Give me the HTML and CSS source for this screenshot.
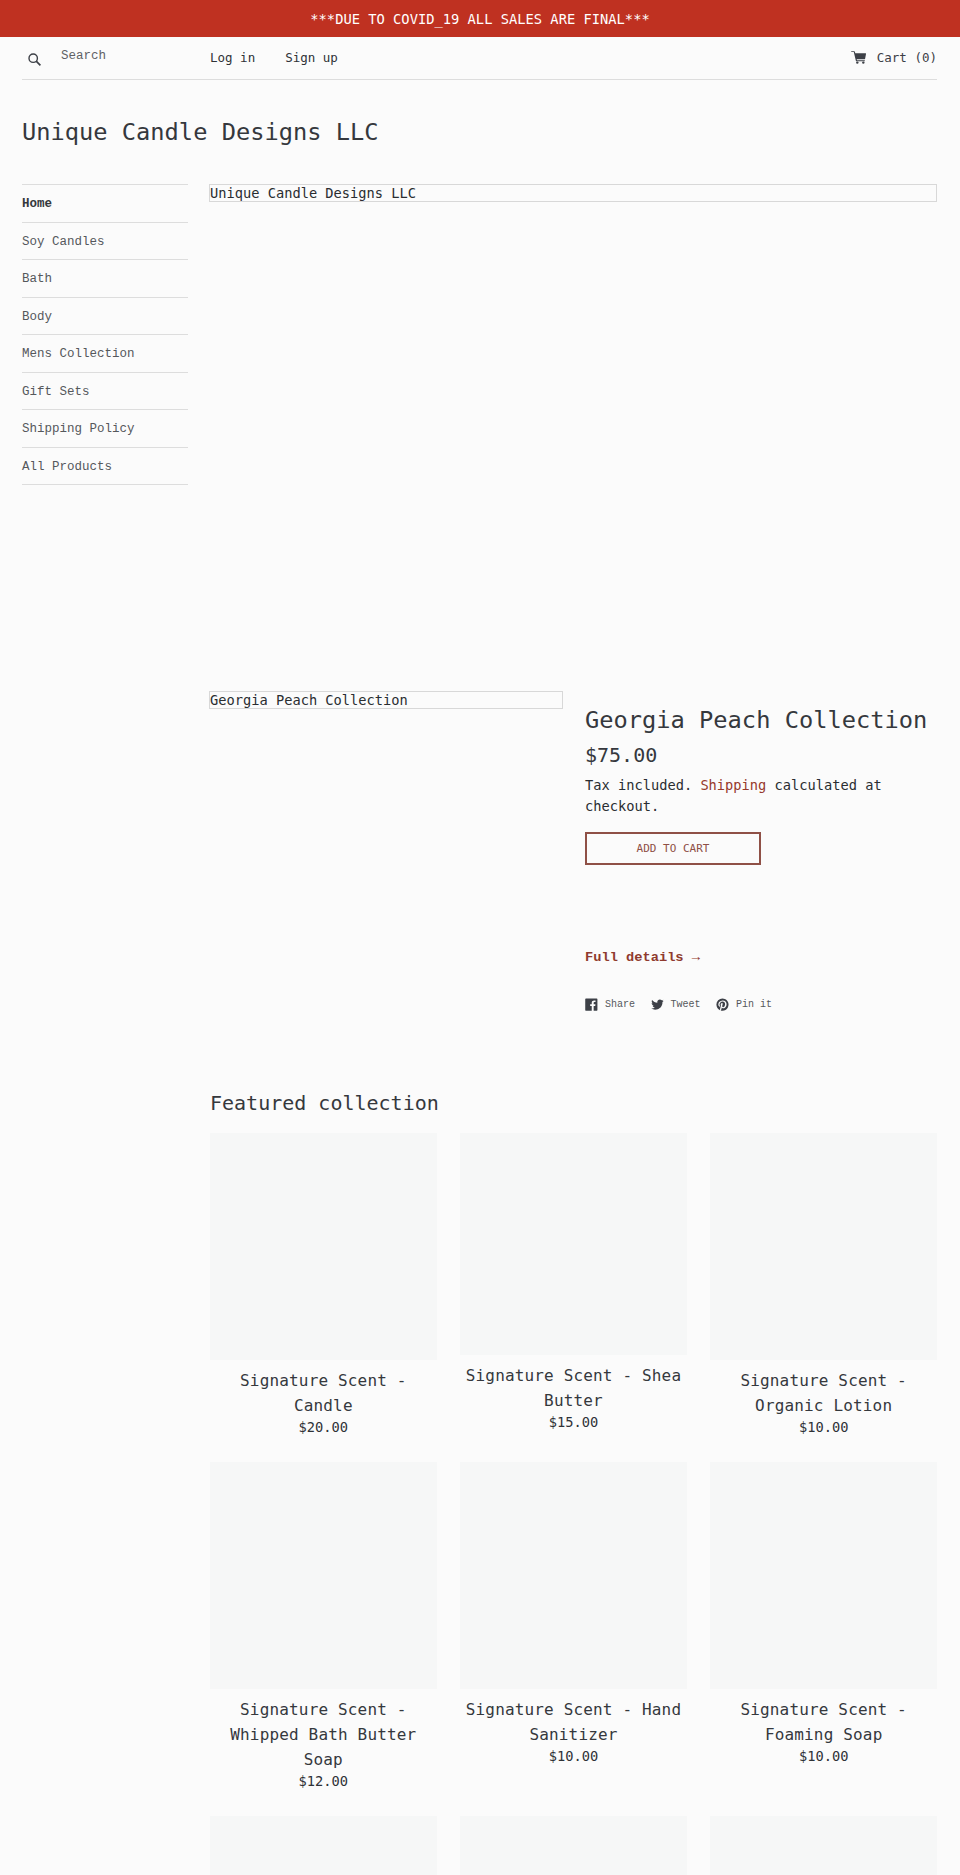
FILE: index.html
```html
<!DOCTYPE html>
<html lang="en">
<head>
    <meta charset="UTF-8">
    <meta name="viewport" content="width=device-width, initial-scale=1.0">
    <title>Unique Candle Designs LLC</title>
    <link rel="stylesheet" href="styles.css">
</head>
<body>
    <div class="announcement">***DUE TO COVID_19 ALL SALES ARE FINAL***</div>

    <div class="page">
        <header class="top-bar">
            <form class="search">
                <svg class="icon-search" viewBox="0 0 13 13" aria-hidden="true">
                    <circle cx="5.2" cy="5.2" r="4.2" fill="none" stroke="#3d4047" stroke-width="1.4"/>
                    <path d="M8.2 8.2L12.4 12.4" stroke="#3d4047" stroke-width="1.7" fill="none"/>
                </svg>
                <span class="search-text">Search</span>
            </form>
            <nav class="account">
                <a href="#">Log in</a>
                <a href="#">Sign up</a>
            </nav>
            <a class="cart" href="#">
                <svg class="icon-cart" viewBox="0 0 20 17" aria-hidden="true">
                    <path fill="#3d4047" d="M0 .6C0 .3.3 0 .6 0h3.6c.5 0 .9.3 1 .8l.5 2h13.6c.5 0 .8.4.7.9l-1.2 6.4c-.1.5-.5.8-1 .8H7.6l.3 1.2h10c.4 0 .7.3.7.7s-.3.7-.7.7H7.3c-.4 0-.7-.3-.8-.7L3.7 1.3H.6C.3 1.3 0 1 0 .6z"/>
                    <circle fill="#3d4047" cx="8.4" cy="15.3" r="1.6"/>
                    <circle fill="#3d4047" cx="16.4" cy="15.3" r="1.6"/>
                </svg>
                <span>Cart (0)</span>
            </a>
        </header>

        <h1 class="site-title">Unique Candle Designs LLC</h1>

        <div class="layout">
            <nav class="sidebar">
                <ul>
                    <li class="active"><a href="#">Home</a></li>
                    <li><a href="#">Soy Candles</a></li>
                    <li><a href="#">Bath</a></li>
                    <li><a href="#">Body</a></li>
                    <li><a href="#">Mens Collection</a></li>
                    <li><a href="#">Gift Sets</a></li>
                    <li><a href="#">Shipping Policy</a></li>
                    <li><a href="#">All Products</a></li>
                </ul>
            </nav>

            <main class="content">
                <div class="hero">
                    <div class="alt-box">Unique Candle Designs LLC</div>
                </div>

                <section class="product">
                    <div class="product-photo">
                        <div class="alt-box">Georgia Peach Collection</div>
                    </div>
                    <div class="product-info">
                        <h2 class="product-title">Georgia Peach Collection</h2>
                        <div class="product-price">$75.00</div>
                        <p class="tax-note">Tax included. <a href="#">Shipping</a> calculated at checkout.</p>
                        <button type="button" class="add-to-cart">ADD TO CART</button>
                        <a class="full-details" href="#">Full details &rarr;</a>
                        <div class="share">
                            <a href="#">
                                <svg viewBox="0 0 20 20" aria-hidden="true"><path d="M18.05.811q.439 0 .744.305t.305.744v16.637q0 .439-.305.744t-.744.305h-4.732v-7.221h2.415l.342-2.854h-2.757v-1.83q0-.659.293-1t1.073-.342h1.488V3.762q-.976-.098-2.171-.098-1.634 0-2.635.964t-1 2.72V9.47H7.951v2.854h2.415v7.221H1.413q-.439 0-.744-.305t-.305-.744V1.859q0-.439.305-.744T1.413.81H18.05z"/></svg>
                                <span>Share</span>
                            </a>
                            <a href="#">
                                <svg viewBox="0 0 20 20" aria-hidden="true"><path d="M19.551 4.208q-.815 1.202-1.956 2.038 0 .082.02.255t.02.255q0 1.589-.469 3.179t-1.426 3.036-2.272 2.567-3.158 1.793-3.963.672q-3.301 0-6.031-1.773.571.041.937.041 2.751 0 4.911-1.671-1.284-.02-2.292-.784T2.456 11.85q.346.082.754.082.55 0 1.039-.163-1.365-.285-2.262-1.365T1.09 7.918v-.041q.774.408 1.773.448-.795-.53-1.263-1.396t-.469-1.864q0-1.019.509-1.997 1.487 1.854 3.596 2.924T9.81 7.184q-.143-.509-.143-.897 0-1.63 1.161-2.781t2.832-1.151q1.712 0 2.851 1.182 1.345-.265 2.56-.984-.469 1.467-1.752 2.242 1.182-.143 2.332-.587z"/></svg>
                                <span>Tweet</span>
                            </a>
                            <a href="#">
                                <svg viewBox="0 0 20 20" aria-hidden="true"><path d="M9.958.811q1.903 0 3.635.744t2.988 2 2 2.988.744 3.635q0 2.537-1.256 4.696t-3.415 3.415-4.696 1.256q-1.39 0-2.659-.366.707-1.147.951-2.025l.659-2.561q.244.463.903.817t1.39.354q1.464 0 2.622-.842t1.793-2.305.634-3.293q0-2.171-1.671-3.769t-4.257-1.598q-1.586 0-2.903.537T5.298 5.897 4.066 7.775t-.427 2.037q0 1.268.476 2.22t1.427 1.342q.171.073.293.012t.171-.232q.171-.61.195-.756.098-.268-.122-.512-.634-.707-.634-1.83 0-1.854 1.281-3.183t3.354-1.329q1.83 0 2.854 1t1.025 2.61q0 1.342-.366 2.476t-1.049 1.817-1.561.683q-.732 0-1.195-.537t-.293-1.269q.098-.342.256-.878t.268-.915.207-.817.098-.732q0-.61-.317-1t-.927-.39q-.756 0-1.269.695t-.512 1.744q0 .39.061.756t.134.537l.073.171q-1 4.342-1.22 5.098-.195.927-.146 2.171-2.513-1.122-4.062-3.44T.59 10.177q0-3.879 2.744-6.623T9.957.81z"/></svg>
                                <span>Pin it</span>
                            </a>
                        </div>
                    </div>
                </section>

                <section class="featured">
                    <h2 class="featured-title">Featured collection</h2>
                    <div class="card-grid">
                        <a class="card" href="#">
                            <div class="card-img"></div>
                            <div class="card-title">Signature Scent - Candle</div>
                            <div class="card-price">$20.00</div>
                        </a>
                        <a class="card" href="#">
                            <div class="card-img card-img-short"></div>
                            <div class="card-title">Signature Scent - Shea Butter</div>
                            <div class="card-price">$15.00</div>
                        </a>
                        <a class="card" href="#">
                            <div class="card-img"></div>
                            <div class="card-title">Signature Scent - Organic Lotion</div>
                            <div class="card-price">$10.00</div>
                        </a>
                        <a class="card" href="#">
                            <div class="card-img"></div>
                            <div class="card-title">Signature Scent - Whipped Bath Butter Soap</div>
                            <div class="card-price">$12.00</div>
                        </a>
                        <a class="card" href="#">
                            <div class="card-img"></div>
                            <div class="card-title">Signature Scent - Hand Sanitizer</div>
                            <div class="card-price">$10.00</div>
                        </a>
                        <a class="card" href="#">
                            <div class="card-img"></div>
                            <div class="card-title">Signature Scent - Foaming Soap</div>
                            <div class="card-price">$10.00</div>
                        </a>
                        <a class="card" href="#"><div class="card-img"></div></a>
                        <a class="card" href="#"><div class="card-img"></div></a>
                        <a class="card" href="#"><div class="card-img"></div></a>
                    </div>
                </section>
            </main>
        </div>
    </div>
</body>
</html>
```

FILE: styles.css
```css
html, body {
    height: 1875px;
    overflow: hidden;
}
body {
    margin: 0;
    background-color: #fbfbfb;
    color: #2f3237;
    font-family: "DejaVu Sans Mono", monospace;
    font-size: 13.7px;
}
a {
    color: inherit;
    text-decoration: none;
}
ul {
    list-style: none;
    margin: 0;
    padding: 0;
}
h1, h2, p {
    margin: 0;
    font-weight: normal;
}

.announcement {
    height: 37px;
    padding-top: 1px;
    box-sizing: border-box;
    line-height: 36px;
    background-color: #bf3121;
    color: #fff;
    font-size: 13.75px;
    text-align: center;
}

.page {
    padding: 0 23px 0 22px;
}

.top-bar {
    display: flex;
    align-items: center;
    height: 40px;
    padding-bottom: 2px;
    border-bottom: 1px solid #ddd;
    font-size: 12.5px;
}
.search {
    display: flex;
    align-items: center;
    width: 188px;
    padding-left: 6px;
    box-sizing: border-box;
}
.icon-search {
    width: 13px;
    height: 13px;
    margin-top: 5px;
}
.search-text {
    margin-left: 20px;
    margin-top: -3px;
    font-family: "Liberation Mono", monospace;
    font-size: 12.5px;
    color: #5e6165;
}
.account {
    display: flex;
    gap: 30px;
}
.cart {
    display: flex;
    align-items: center;
    margin-left: auto;
    color: #3d4047;
}
.icon-cart {
    width: 15px;
    height: 13px;
    margin-right: 11px;
}

.site-title {
    height: 104px;
    line-height: 104px;
    font-size: 23.7px;
    color: #35383d;
}

.layout {
    display: flex;
    gap: 22px;
}

.sidebar {
    flex: 0 0 166px;
}
.sidebar ul {
    border-top: 1px solid #ddd;
}
.sidebar li {
    height: 37.5px;
    padding-top: 1px;
    box-sizing: border-box;
    line-height: 36.5px;
    border-bottom: 1px solid #ddd;
    font-family: "Liberation Mono", monospace;
    font-size: 12.5px;
    color: #55585c;
}
.sidebar li.active {
    font-weight: bold;
    color: #35383d;
}

.content {
    flex: 1;
    min-width: 0;
}

.alt-box {
    height: 16px;
    line-height: 16px;
    margin-left: -1px;
    border: 1px solid #d8d8d8;
    color: #2a2d31;
    white-space: nowrap;
}

.hero {
    height: 507px;
}

.product {
    display: flex;
    gap: 22px;
}
.product-photo {
    flex: 0 0 353px;
}
.product-info {
    flex: 1;
    padding-top: 12px;
}
.product-title {
    line-height: 34px;
    font-size: 23.7px;
    color: #35383d;
}
.product-price {
    margin-top: 4px;
    line-height: 28px;
    font-size: 20px;
    color: #35383d;
}
.tax-note {
    margin-top: 6px;
    line-height: 21px;
    color: #2a2d31;
}
.tax-note a {
    color: #96392c;
}
.add-to-cart {
    display: block;
    width: 176px;
    height: 33px;
    margin-top: 15px;
    padding: 0;
    background: transparent;
    border: 2px solid #8f5046;
    color: #8f5046;
    font-family: "DejaVu Sans Mono", monospace;
    font-size: 11px;
}
.full-details {
    display: block;
    margin-top: 82px;
    line-height: 21px;
    font-family: "Liberation Mono", monospace;
    font-size: 13.7px;
    font-weight: bold;
    color: #8f3a2e;
}
.share {
    display: flex;
    gap: 15.5px;
    margin-top: 26px;
    font-family: "Liberation Mono", monospace;
    font-size: 10px;
    color: #55585c;
}
.share a {
    display: flex;
    align-items: center;
    gap: 7px;
    height: 20px;
}
.share svg {
    width: 13px;
    height: 13px;
    fill: #3d4047;
}

.featured {
    margin-top: 74px;
}
.featured-title {
    height: 45px;
    line-height: 30px;
    font-size: 20px;
    color: #35383d;
}
.card-grid {
    display: grid;
    grid-template-columns: repeat(3, 1fr);
    column-gap: 23.5px;
    row-gap: 25.5px;
}
.card {
    display: block;
    text-align: center;
}
.card-img {
    height: 226.67px;
    background-color: #f6f7f7;
}
.card-img-short {
    height: 221.5px;
}
.card-title {
    margin-top: 8px;
    line-height: 25px;
    font-size: 16px;
    letter-spacing: 0.16px;
    color: #35383d;
}
.card-price {
    line-height: 19px;
    font-size: 13.7px;
}
```
